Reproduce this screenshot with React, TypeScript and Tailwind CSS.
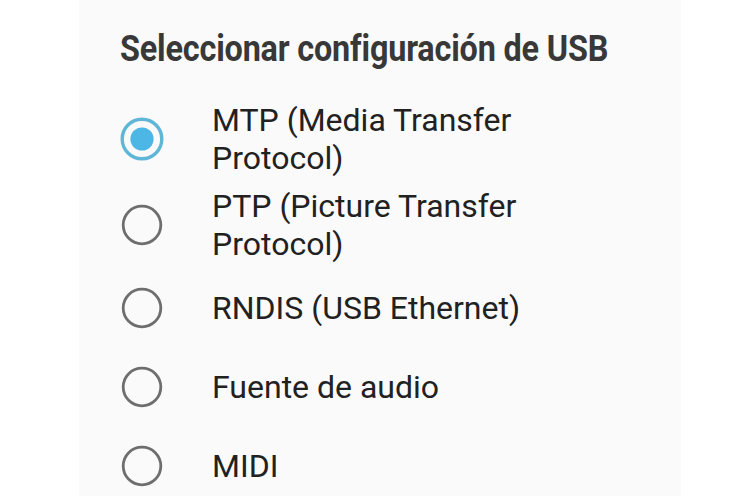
import React from "react";

type Item = { label: string; checked?: boolean; h: string };

const items: Item[] = [
  { label: "MTP (Media Transfer Protocol)", checked: true, h: "h-[86px]" },
  { label: "PTP (Picture Transfer Protocol)", h: "h-[86px]" },
  { label: "RNDIS (USB Ethernet)", h: "h-[79px]" },
  { label: "Fuente de audio", h: "h-[79px]" },
  { label: "MIDI", h: "h-[79px]" },
];

function Radio({ checked }: { checked?: boolean }) {
  if (checked) {
    return (
      <svg width="44" height="44" viewBox="0 0 44 44">
        <circle cx="22" cy="22" r="19.8" fill="none" stroke="#5fb6d6" strokeWidth="3.4" />
        <circle cx="22" cy="22" r="11.6" fill="#4cb6e4" />
      </svg>
    );
  }
  return (
    <svg width="44" height="44" viewBox="0 0 44 44">
      <circle cx="22" cy="22" r="18.8" fill="none" stroke="#6e6e6e" strokeWidth="2.8" />
    </svg>
  );
}

export default function App() {
  return (
    <div className="w-[745px] h-[496px] bg-white overflow-hidden" style={{ fontFamily: "Roboto, 'Noto Sans', sans-serif" }}>
      <div className="ml-[79px] w-[602px] h-full bg-[#fafafa] pl-[41px] pt-[30px] flex flex-col">
        <div className="h-[37px] leading-[37px] text-[37px] font-bold text-[#383838] whitespace-nowrap origin-left scale-x-[0.875] tracking-[-0.2px]">
          Seleccionar configuración de USB
        </div>
        <div className="mt-[29px] flex flex-col">
          {items.map((it) => (
            <div key={it.label} className={`flex items-center ${it.h}`}>
              <div className="w-[44px] h-[44px] flex items-center justify-center">
                <Radio checked={it.checked} />
              </div>
              <div className="ml-[48px] w-[340px] text-[32px] leading-[38px] text-[#212121]">
                {it.label}
              </div>
            </div>
          ))}
        </div>
      </div>
    </div>
  );
}
